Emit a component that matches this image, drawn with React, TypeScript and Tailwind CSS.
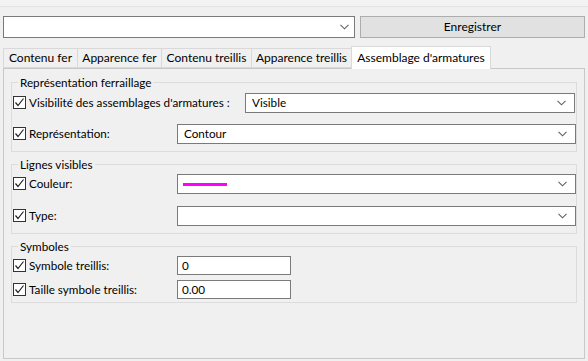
import React from "react";

const Chevron = ({ className = "" }: { className?: string }) => (
  <svg width="9" height="6" viewBox="0 0 9 6" className={className}>
    <path d="M0.5 0.8 L4.5 4.8 L8.5 0.8" fill="none" stroke="#606060" strokeWidth="1.1" />
  </svg>
);

const Check = () => (
  <div className="w-[13px] h-[13px] border border-[#333333] bg-white flex items-center justify-center shrink-0">
    <svg width="11" height="11" viewBox="0 0 11 11">
      <path d="M1.5 5.5 L4 8.5 L9.5 1.5" fill="none" stroke="#222222" strokeWidth="1.2" />
    </svg>
  </div>
);

const Combo = ({ children, className = "" }: { children?: React.ReactNode; className?: string }) => (
  <div className={`h-[20px] bg-white border border-[#7a7a7a] flex items-center pl-[6px] pr-[8px] ${className}`}>
    <div className="flex-1 flex items-center">{children}</div>
    <Chevron />
  </div>
);

const Input = ({ value }: { value: string }) => (
  <div className="h-[19px] w-[114px] bg-white border border-[#7a7a7a] flex items-center pl-[4px]">{value}</div>
);

const Group = ({ title, children, className = "" }: { title: string; children: React.ReactNode; className?: string }) => (
  <div className={`relative border border-[#dcdcdc] ${className}`}>
    <span className="absolute left-[6px] top-[-9px] leading-[16px] px-[2px] bg-[#f0f0f0]">{title}</span>
    {children}
  </div>
);

const Row = ({ label, children, className = "" }: { label: string; children: React.ReactNode; className?: string }) => (
  <div className={`flex items-center ${className}`}>
    <div className="w-[164px] flex items-center gap-[3px] shrink-0">
      <Check />
      <span className="whitespace-nowrap">{label}</span>
    </div>
    {children}
  </div>
);

export default function App() {
  const tabs = [
    { t: "Contenu fer", w: 74 },
    { t: "Apparence fer", w: 84 },
    { t: "Contenu treillis", w: 90 },
    { t: "Apparence treillis", w: 100 },
  ];
  return (
    <div
      className="w-[588px] h-[361px] bg-[#f0f0f0] text-[11.7px] text-black overflow-hidden"
      style={{ fontFamily: 'Lato, "Liberation Sans", sans-serif' }}
    >
      <div className="h-[7px] border-b border-[#e3e3e3] bg-[#f3f3f3]" />
      <div className="flex pl-[3px] pt-[9px] gap-[5px]">
        <div className="w-[352px] h-[22px] bg-white border border-[#7a7a7a] flex items-center justify-end pr-[5px]">
          <Chevron />
        </div>
        <div className="w-[225px] h-[22px] bg-[#e1e1e1] border border-[#adadad] flex items-center justify-center text-[12px]">
          Enregistrer
        </div>
      </div>
      <div className="flex pl-[3px] mt-[8px] items-end h-[22px] relative z-10 text-[12px]">
        {tabs.map((tb) => (
          <div
            key={tb.t}
            style={{ width: tb.w }}
            className="h-[20px] border border-[#d9d9d9] border-r-0 flex items-center justify-center whitespace-nowrap bg-[#f0f0f0]"
          >
            {tb.t}
          </div>
        ))}
        <div className="w-[140px] h-[23px] bg-white border border-[#d9d9d9] border-b-0 flex items-center justify-center whitespace-nowrap mb-[-1px]">
          Assemblage d'armatures
        </div>
      </div>
      <div className="ml-[3px] w-[582px] h-[291px] border border-[#c8c8c8] pt-[13px] pl-[7px]">
        <Group title="Représentation ferraillage" className="w-[566px] h-[70px] pt-[10px] pl-[1px]">
          <Row label="Visibilité des assemblages d'armatures :">
            <Combo className="ml-[68px] w-[330px]">Visible</Combo>
          </Row>
          <Row label="Représentation:" className="mt-[11px]">
            <Combo className="w-[399px]">Contour</Combo>
          </Row>
        </Group>
        <Group title="Lignes visibles" className="w-[566px] h-[70px] mt-[12px] pt-[9px] pl-[1px]">
          <Row label="Couleur:">
            <Combo className="w-[399px]">
              <div className="w-[44px] h-[3px] bg-[#ff00ff] ml-[-1px]" />
            </Combo>
          </Row>
          <Row label="Type:" className="mt-[12px]">
            <Combo className="w-[399px]" />
          </Row>
        </Group>
        <Group title="Symboles" className="w-[566px] h-[57px] mt-[12px] pt-[9px] pl-[1px]">
          <Row label="Symbole treillis:">
            <Input value="0" />
          </Row>
          <Row label="Taille symbole treillis:" className="mt-[5px]">
            <Input value="0.00" />
          </Row>
        </Group>
      </div>
    </div>
  );
}
